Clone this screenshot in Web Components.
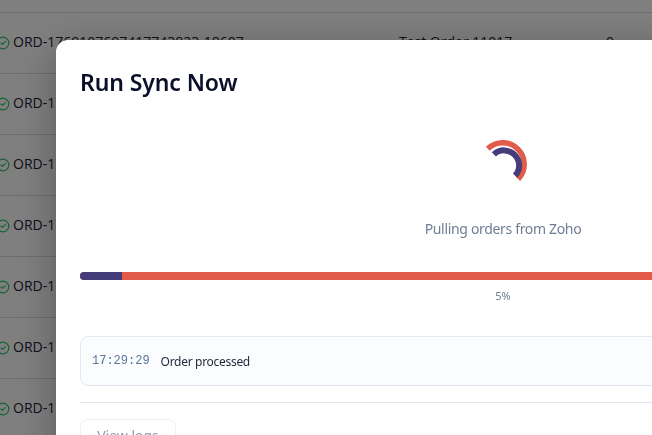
<!DOCTYPE html>
<html>
<head>
<meta charset="utf-8">
<style>
  html, body { margin: 0; height: 100%; overflow: hidden; background: #fff; font-family: "Open Sans", sans-serif; }
</style>
</head>
<body>
<order-table>
  <order-row order="ORD-1769107697417743823-18607" name="Test Order 11017" qty="0"></order-row>
  <order-row order="ORD-1769107697417743823-18606" name="Test Order 11016" qty="0"></order-row>
  <order-row order="ORD-1769107697417743823-18605" name="Test Order 11015" qty="0"></order-row>
  <order-row order="ORD-1769107697417743823-18604" name="Test Order 11014" qty="0"></order-row>
  <order-row order="ORD-1769107697417743823-18603" name="Test Order 11013" qty="0"></order-row>
  <order-row order="ORD-1769107697417743823-18602" name="Test Order 11012" qty="0"></order-row>
  <order-row order="ORD-1769107697417743823-18601" name="Test Order 11011" qty="0"></order-row>
</order-table>
<sync-modal heading="Run Sync Now">
  <sync-spinner></sync-spinner>
  <sync-progress status="Pulling orders from Zoho" percent="5"></sync-progress>
  <log-line time="17:29:29" message="Order processed"></log-line>
</sync-modal>

<script>
// Background table row
class OrderRow extends HTMLElement {
  constructor() {
    super();
    this.attachShadow({ mode: "open" });
  }

  connectedCallback() {
    const order = this.getAttribute("order") || "";
    const name = this.getAttribute("name") || "";
    const qty = this.getAttribute("qty") || "";

    this.shadowRoot.innerHTML = `
      <style>
        :host {
          display: grid;
          grid-template-columns: 399px 207px auto;
          align-items: center;
          height: 60px;
          border-bottom: 1px solid #d9dde3;
          font-size: 14px;
          line-height: 18px;
          color: #1a2233;
          white-space: nowrap;
        }
        .cell { padding-bottom: 2px; }
        .order { display: flex; align-items: center; gap: 3px; margin-left: -4px; }
        svg { flex: none; position: relative; top: 1px; }
      </style>
      <div class="order cell">
        <svg width="14" height="14" viewBox="0 0 24 24" fill="none" stroke="#2cc46c" stroke-width="2" stroke-linecap="round" stroke-linejoin="round">
          <circle cx="12" cy="12" r="10"></circle>
          <path d="m8.5 12 2.5 2.5 5-5"></path>
        </svg>
        <span>${order}</span>
      </div>
      <div class="cell">${name}</div>
      <div class="cell">${qty}</div>
    `;
  }
}

class OrderTable extends HTMLElement {
  constructor() {
    super();
    this.attachShadow({ mode: "open" });
    this.shadowRoot.innerHTML = `
      <style>
        :host { display: block; margin-top: -48px; }
        .top { height: 60px; border-bottom: 1px solid #d9dde3; }
      </style>
      <div class="top"></div>
      <slot></slot>
    `;
  }
}

// Modal over a dimmed backdrop
class SyncModal extends HTMLElement {
  constructor() {
    super();
    this.attachShadow({ mode: "open" });
  }

  connectedCallback() {
    const heading = this.getAttribute("heading") || "";

    this.shadowRoot.innerHTML = `
      <style>
        :host {
          position: fixed;
          inset: 0;
          display: block;
          background: rgba(0, 0, 0, 0.5);
        }
        .panel {
          position: absolute;
          left: 56px;
          top: 40px;
          width: 894px;
          box-sizing: border-box;
          padding: 24px;
          background: #fff;
          border-radius: 12px;
          box-shadow: 0 10px 40px rgba(0, 0, 0, 0.3);
        }
        h2 {
          margin: 0 0 40px;
          font: 600 23px/36px "Noto Sans", sans-serif;
          letter-spacing: -0.1px;
          color: #0a0f2a;
        }
        .footer {
          margin-top: 16px;
          padding-top: 16px;
          border-top: 1px solid #e2e8f0;
        }
        button {
          display: block;
          width: 96px;
          height: 36px;
          padding: 0 0 4px;
          background: #fff;
          border: 1px solid #eef1f5;
          border-radius: 8px;
          font: 14px "Noto Sans", sans-serif;
          color: #8f98a6;
        }
      </style>
      <div class="panel">
        <h2>${heading}</h2>
        <slot></slot>
        <div class="footer"><button>View logs</button></div>
      </div>
    `;
  }
}

class SyncSpinner extends HTMLElement {
  constructor() {
    super();
    this.attachShadow({ mode: "open" });
    this.shadowRoot.innerHTML = `
      <style>
        :host { display: flex; justify-content: center; }
      </style>
      <svg width="48" height="48" viewBox="0 0 48 48" fill="none">
        <path d="M8.8 8.8A21.5 21.5 0 0 1 39.2 39.2" stroke="#e25a4a" stroke-width="5.5"></path>
        <path d="M14.9 14.4A15 15 0 0 1 36.1 35.6" stroke="#453c7c" stroke-width="6"></path>
      </svg>
    `;
  }
}

class SyncProgress extends HTMLElement {
  constructor() {
    super();
    this.attachShadow({ mode: "open" });
  }

  connectedCallback() {
    const status = this.getAttribute("status") || "";
    const percent = this.getAttribute("percent") || "0";

    this.shadowRoot.innerHTML = `
      <style>
        :host { display: block; text-align: center; font-family: "Noto Sans", sans-serif; }
        .status { margin: 31px 0 33px; font-size: 14px; line-height: 20px; letter-spacing: -0.33px; color: #6f7e94; }
        .track { height: 8px; border-radius: 4px; background: #e25a4a; overflow: hidden; }
        .bar { height: 100%; width: ${percent}%; background: #453c7c; }
        .percent { margin-top: 8px; font-size: 11px; line-height: 16px; color: #6f7e94; }
      </style>
      <div class="status">${status}</div>
      <div class="track"><div class="bar"></div></div>
      <div class="percent">${percent}%</div>
    `;
  }
}

class LogLine extends HTMLElement {
  constructor() {
    super();
    this.attachShadow({ mode: "open" });
  }

  connectedCallback() {
    const time = this.getAttribute("time") || "";
    const message = this.getAttribute("message") || "";

    this.shadowRoot.innerHTML = `
      <style>
        :host {
          display: flex;
          align-items: center;
          gap: 11px;
          box-sizing: border-box;
          height: 50px;
          margin-top: 32px;
          padding: 0 11px;
          background: #fbfcfe;
          border: 1px solid #e2e8f0;
          border-radius: 8px;
          font-size: 12px;
        }
        .time { font-family: "Liberation Mono", monospace; color: #5a7599; }
        .msg { font-family: "Noto Sans", sans-serif; letter-spacing: -0.3px; color: #1e293b; }
      </style>
      <span class="time">${time}</span>
      <span class="msg">${message}</span>
    `;
  }
}

customElements.define("order-row", OrderRow);
customElements.define("order-table", OrderTable);
customElements.define("sync-modal", SyncModal);
customElements.define("sync-spinner", SyncSpinner);
customElements.define("sync-progress", SyncProgress);
customElements.define("log-line", LogLine);
</script>
</body>
</html>
